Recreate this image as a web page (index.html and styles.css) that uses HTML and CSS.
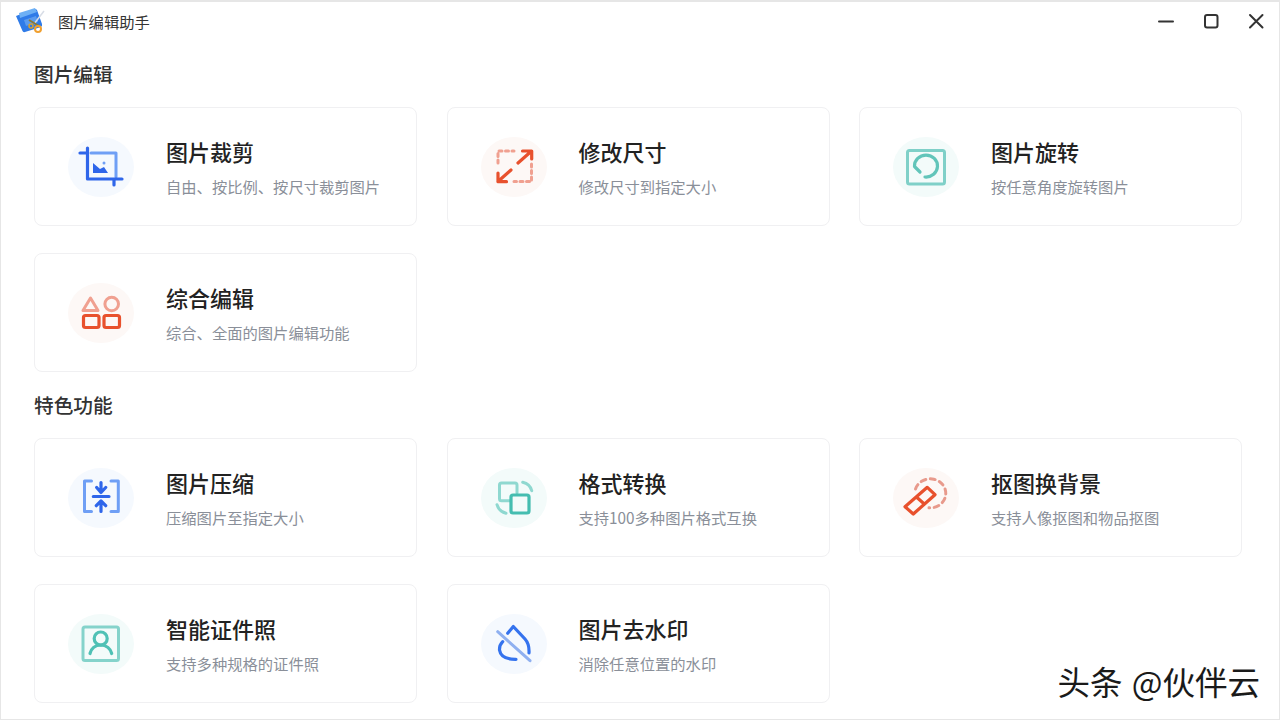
FILE: index.html
```html
<!DOCTYPE html>
<html lang="zh-CN">
<head>
  <meta charset="UTF-8" />
  <title>图片编辑助手</title>
  <link rel="stylesheet" href="styles.css">
</head>
<body>
  <div class="window">
    <header class="titlebar">
      <div class="appTitle">
        <svg class="appLogo" width="32" height="28" viewBox="0 0 32 28">
          <path d="M1 9 L19 2 Q21 1.500 22 3 L27 17 Q27.500 19 26 20 L10 25 Q8 25.500 7.500 24 Z" fill="#2f7be8" />
          <path d="M4 6 L20 1 L22 5 L5 11 Z" fill="#6db0f5" />
          <path d="M9 13 L21 9 L23 15 L11 19 Z" fill="#5a9bef" />
          <path d="M29 4 L19 17" stroke="#d8dde6" stroke-width="1.500" fill="none" />
          <path d="M14 13 L24 19" stroke="#8a7a3a" stroke-width="2" fill="none" />
          <circle cx="23" cy="22" r="3" fill="none" stroke="#f0a030" stroke-width="2" />
          <circle cx="16" cy="19" r="2" fill="none" stroke="#d8a030" stroke-width="1.500" />
        </svg>
        <span>图片编辑助手</span>
      </div>
      <div class="winButtons">
        <svg width="16" height="16" viewBox="0 0 16 16"><path d="M1 8.500 H15" /></svg>
        <svg width="16" height="16" viewBox="0 0 16 16"><rect x="2" y="2" width="12.500" height="12.500" rx="2" /></svg>
        <svg width="16" height="16" viewBox="0 0 16 16"><path d="M2 2 L14.500 14.500 M14.500 2 L2 14.500" /></svg>
      </div>
    </header>

    <main class="content">
      <h2 class="sectionTitle">图片编辑</h2>
      <div class="cardGrid">
        <div class="card">
          <div class="iconCircle blue">
            <svg width="66" height="60" viewBox="0 0 66 60">
              <path class="lineLight" d="M23 16 H48 V40" stroke="#6f9ff5" />
              <path class="lineDark" d="M12 16 H19.500 M19.500 11 V42 H54 M46 42 V48" stroke="#2f66ea" />
              <path d="M25 36 V26 L32 32 L36 30 L40 36 Z" fill="#2f66ea" />
              <circle cx="36" cy="26" r="1.500" fill="#6f9ff5" />
            </svg>
          </div>
          <div class="cardText">
            <div class="cardName">图片裁剪</div>
            <div class="cardDesc">自由、按比例、按尺寸裁剪图片</div>
          </div>
        </div>
        <div class="card">
          <div class="iconCircle orange">
            <svg width="66" height="60" viewBox="0 0 66 60">
              <path class="lineLight" d="M17 26 V14 H33 M50.500 27 V44.500 H33" stroke="#f0a090" stroke-dasharray="3 3.500" />
              <path class="lineDark" d="M37 26 L50 14.500 M41.500 14 H50.700 V22 M30 33 L17 44.500 M17 36 V44.700 H25.500" stroke="#e8512d" />
            </svg>
          </div>
          <div class="cardText">
            <div class="cardName">修改尺寸</div>
            <div class="cardDesc">修改尺寸到指定大小</div>
          </div>
        </div>
        <div class="card">
          <div class="iconCircle teal">
            <svg width="66" height="60" viewBox="0 0 66 60">
              <rect class="lineLight" x="14.500" y="13.500" width="37" height="33.500" rx="2" stroke="#7fd0c8" />
              <path class="lineDark" d="M32 40 A11.500 11 0 1 0 21.500 29.500 L27 35" stroke="#62c5ba" />
            </svg>
          </div>
          <div class="cardText">
            <div class="cardName">图片旋转</div>
            <div class="cardDesc">按任意角度旋转图片</div>
          </div>
        </div>
        <div class="card">
          <div class="iconCircle orange">
            <svg width="66" height="60" viewBox="0 0 66 60">
              <path class="lineLight" d="M22.500 15 L30 27.500 H15 Z" stroke="#f0a090" />
              <circle class="lineLight" cx="43.700" cy="21" r="6.800" stroke="#f0a090" />
              <rect class="lineDark" x="15.500" y="32.500" width="15.500" height="12" rx="2" stroke="#e8512d" />
              <rect class="lineDark" x="36" y="32.500" width="15.500" height="12" rx="2" stroke="#e8512d" />
            </svg>
          </div>
          <div class="cardText">
            <div class="cardName">综合编辑</div>
            <div class="cardDesc">综合、全面的图片编辑功能</div>
          </div>
        </div>
      </div>

      <h2 class="sectionTitle second">特色功能</h2>
      <div class="cardGrid">
        <div class="card">
          <div class="iconCircle blue">
            <svg width="66" height="60" viewBox="0 0 66 60">
              <path class="lineLight" d="M23.500 13 H16.500 V43.500 H23.500 M43 13 H50.300 V43.500 H43" stroke="#6f9ff5" />
              <path class="lineDark" d="M33 14.500 V24.500 M28.700 19.500 L33 24.500 L37.700 19.500 M25.300 28.500 H41 M33 43.500 V33 M28.300 37.700 L33 33 L37.700 37.700" stroke="#2f66ea" />
            </svg>
          </div>
          <div class="cardText">
            <div class="cardName">图片压缩</div>
            <div class="cardDesc">压缩图片至指定大小</div>
          </div>
        </div>
        <div class="card">
          <div class="iconCircle teal">
            <svg width="66" height="60" viewBox="0 0 66 60">
              <path class="lineLight" d="M29 32.700 H20.500 Q18.500 32.700 18.500 30.700 V17 Q18.500 15 20.500 15 H34 Q36 15 36 17 V25" stroke="#8fd8d0" />
              <rect class="lineDark" x="30" y="27" width="18" height="18" rx="2" stroke="#45bdb0" />
              <path class="lineLight" d="M41.700 14.300 Q49 16 50.700 22.700 M16 36.700 Q18 43.500 25 45.300" stroke="#8fd8d0" />
            </svg>
          </div>
          <div class="cardText">
            <div class="cardName">格式转换</div>
            <div class="cardDesc">支持100多种图片格式互换</div>
          </div>
        </div>
        <div class="card">
          <div class="iconCircle orange">
            <svg width="66" height="60" viewBox="0 0 66 60">
              <path class="lineLight" d="M22.500 21 A15.500 14.500 0 1 1 36 39.800" stroke="#e89a8c" stroke-dasharray="5 4.500" />
              <path class="lineDark" d="M12 38.700 L34.300 19.300 L42 26.700 L20.300 46 Z M23.700 29.300 L31.300 36" stroke="#e8512d" />
            </svg>
          </div>
          <div class="cardText">
            <div class="cardName">抠图换背景</div>
            <div class="cardDesc">支持人像抠图和物品抠图</div>
          </div>
        </div>
        <div class="card">
          <div class="iconCircle teal">
            <svg width="66" height="60" viewBox="0 0 66 60">
              <rect class="lineLight" x="15" y="13" width="35.500" height="33.500" rx="2" stroke="#85d3cb" />
              <circle class="lineDark" cx="32.700" cy="24.500" r="6.500" stroke="#4fc1b5" />
              <path class="lineDark" d="M22 39.500 Q24 31.500 32.700 31 Q41.500 31.500 43.700 39.500" stroke="#4fc1b5" />
            </svg>
          </div>
          <div class="cardText">
            <div class="cardName">智能证件照</div>
            <div class="cardDesc">支持多种规格的证件照</div>
          </div>
        </div>
        <div class="card">
          <div class="iconCircle blue">
            <svg width="66" height="60" viewBox="0 0 66 60">
              <path class="lineDark" d="M26.700 19.300 L32.300 12.500 L44 25 Q48.500 30 48 39" stroke="#3573ee" />
              <path class="lineDark" d="M21.700 27.700 Q18.300 31 18.500 36 Q20 45.500 35 45.300" stroke="#3573ee" />
              <path class="lineLight" d="M16.700 17.700 L49 46.700" stroke="#8fb0f0" />
            </svg>
          </div>
          <div class="cardText">
            <div class="cardName">图片去水印</div>
            <div class="cardDesc">消除任意位置的水印</div>
          </div>
        </div>
      </div>
    </main>

    <div class="watermark">头条 @伙伴云</div>
  </div>
</body>
</html>
```

FILE: styles.css
```css
* {
  box-sizing: border-box;
}

body {
  margin: 0;
  background: #fff;
  font-family: "Noto Sans CJK SC", "Liberation Sans", sans-serif;
}

.window {
  position: relative;
  width: 1280px;
  height: 720px;
  overflow: hidden;
  border: 1px solid #e6e6e6;
  border-top-width: 2px;
  background: #fff;
}

.titlebar {
  display: flex;
  align-items: center;
  justify-content: space-between;
  height: 38px;
  padding: 0 15px 0 14px;
}

.appTitle {
  display: flex;
  align-items: center;
  gap: 11px;
  font-size: 15.3px;
  color: #333;
}

.winButtons {
  display: flex;
  align-items: center;
  gap: 29px;
}

.winButtons svg {
  fill: none;
  stroke: #333;
  stroke-width: 2;
  stroke-linecap: round;
}

.content {
  padding: 21px 0 0 33px;
}

.sectionTitle {
  margin: 0 0 20px;
  height: 26px;
  font-size: 19.7px;
  line-height: 26px;
  font-weight: 500;
  color: #333;
}

.sectionTitle.second {
  margin-top: 20px;
}

.cardGrid {
  display: grid;
  grid-template-columns: repeat(3, 383px);
  column-gap: 29.5px;
  row-gap: 27px;
}

.card {
  display: flex;
  align-items: center;
  gap: 32px;
  height: 119px;
  padding-left: 33px;
  border: 1px solid #f0f0f2;
  border-radius: 8px;
}

.iconCircle {
  flex: 0 0 66px;
  height: 60px;
  border-radius: 50%;
}

.iconCircle svg {
  display: block;
}

.iconCircle.blue {
  background: #f5f9fe;
}

.iconCircle.orange {
  background: #fdf8f6;
}

.iconCircle.teal {
  background: #f3fbfa;
}

.lineLight,
.lineDark {
  fill: none;
  stroke-width: 3;
  stroke-linecap: round;
  stroke-linejoin: round;
}

.lineDark {
  stroke-width: 3.2;
}

.cardText {
  padding-top: 1px;
}

.cardName {
  font-size: 22px;
  line-height: 28px;
  font-weight: 500;
  color: #222;
}

.cardDesc {
  margin-top: 10px;
  font-size: 15.3px;
  line-height: 22px;
  color: #8a8f99;
}

.watermark {
  position: absolute;
  right: 19px;
  bottom: 18px;
  font-size: 32.5px;
  line-height: 40px;
  word-spacing: 2px;
  color: #1a1a1a;
  text-shadow: 1px 1px 0 #fff;
}
```
